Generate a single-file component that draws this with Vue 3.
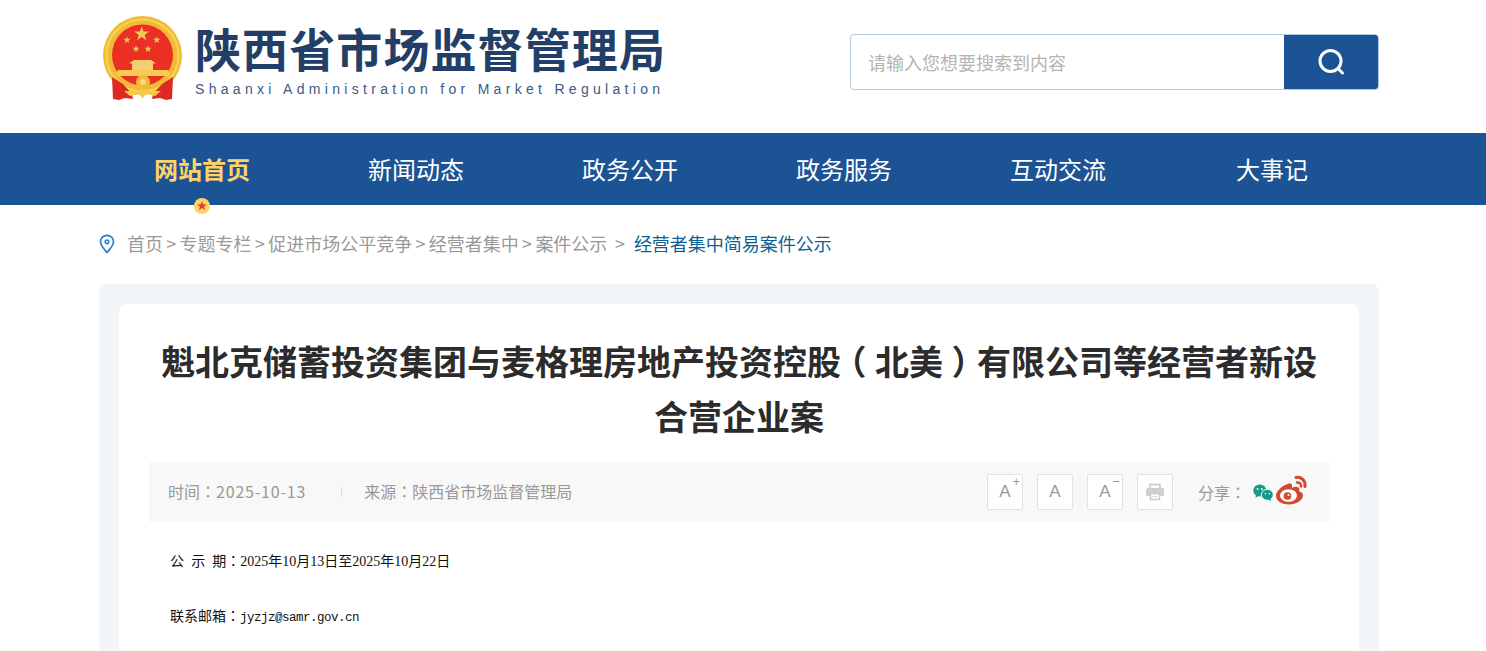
<script setup>
const navItems = ['网站首页', '新闻动态', '政务公开', '政务服务', '互动交流', '大事记']
const crumbs = ['首页', '专题专栏', '促进市场公平竞争', '经营者集中', '案件公示']

// five point star path for the emblem
function star(cx, cy, r) {
  let d = ''
  for (let i = 0; i < 10; i++) {
    const rad = i % 2 ? r * 0.4 : r
    const a = (Math.PI / 5) * i - Math.PI / 2
    d += (i ? 'L' : 'M') + (cx + rad * Math.cos(a)).toFixed(2) + ' ' + (cy + rad * Math.sin(a)).toFixed(2)
  }
  return d + 'Z'
}
const stars = [star(40.7, 20, 7.8), star(26, 26, 3.8), star(55.7, 26, 3.8), star(35, 35, 3.8), star(47, 35, 3.8)]
</script>

<template>
  <div class="page">
    <header class="top wrap">
      <div class="logo">
        <svg class="emblem" width="84" height="88" viewBox="0 0 84 88">
          <circle cx="41.500" cy="41.500" r="39.500" fill="#f1bb35" />
          <circle cx="41.500" cy="41.500" r="36" fill="none" stroke="#f7d35a" stroke-width="2" />
          <circle cx="41.500" cy="41" r="30.500" fill="#ec2f24" />
          <path v-for="s in stars" :key="s" :d="s" fill="#f3c65a" />
          <path d="M33 46h17l5 3.500H28zM31 49.500h21V56H31z" fill="#f6cf70" />
          <path d="M17 56h50l3 6H14z" fill="#f6cb55" />
          <path d="M11 63 L22 70 L31 80 L32 85 L24 84 L18 86 L12 85 Z" fill="#dc2a22" />
          <path d="M72 63 L61 70 L52 80 L51 85 L59 84 L65 86 L71 85 Z" fill="#dc2a22" />
          <circle cx="42" cy="68" r="7" fill="#f0bb3a" />
          <circle cx="42" cy="68" r="3" fill="#f8d97a" />
          <path d="M23 77h14l4.500-3 4.500 3h14l-6 5-9-2-3.500 4.500L38 80l-9 2z" fill="#f5c94a" />
        </svg>
        <div class="logo-text">
          <div class="logo-cn">陕西省市场监督管理局</div>
          <div class="logo-en">Shaanxi Administration for Market Regulation</div>
        </div>
      </div>
      <div class="search">
        <span class="search-hint">请输入您想要搜索到内容</span>
        <div class="search-btn">
          <svg width="30" height="30" viewBox="0 0 30 30" fill="none" stroke="#fff" stroke-width="3" stroke-linecap="round">
            <circle cx="14.500" cy="14" r="10.500" />
            <path d="M22.500 22l4 4" />
          </svg>
        </div>
      </div>
    </header>

    <nav class="nav">
      <ul class="nav-list">
        <li v-for="(item, i) in navItems" :key="item" :class="{ active: i === 0 }">
          {{ item }}
          <span v-if="i === 0" class="nav-dot">
            <svg width="10" height="10" viewBox="0 0 10 10"><path d="M5 0l1.300 3.400H10L7 5.600 8.100 9.300 5 7.100 1.900 9.300 3 5.600 0 3.400h3.700z" fill="#ee3b26" /></svg>
          </span>
        </li>
      </ul>
    </nav>

    <div class="crumbs wrap">
      <svg class="pin" width="16" height="20" viewBox="0 0 16 20" fill="none" stroke="#2f80c8" stroke-width="1.700">
        <path d="M8 18.500C4.500 14.500 1.500 11.500 1.500 7.800a6.500 6.500 0 0 1 13 0c0 3.700-3 6.700-6.500 10.700z" />
        <circle cx="8" cy="7.800" r="1.800" />
      </svg>
      <template v-for="(c, i) in crumbs" :key="c">
        <span>{{ c }}</span><span v-if="i < crumbs.length - 1" class="sep">&gt;</span>
      </template>
      <span class="sep last-sep">&gt;</span>
      <span class="current">经营者集中简易案件公示</span>
    </div>

    <main class="outer wrap">
      <section class="card">
        <h1 class="title">魁北克储蓄投资集团与麦格理房地产投资控股<span class="paren">（</span>北美<span class="paren">）</span>有限公司等经营者新设<br />合营企业案</h1>
        <div class="meta">
          <span>时间<span class="tc">：</span><span class="date">2025-10-13</span></span>
          <i class="meta-line"></i>
          <span>来源<span class="tc">：</span>陕西省市场监督管理局</span>
          <div class="tools">
            <span class="tool">A<b class="mark">+</b></span>
            <span class="tool">A</span>
            <span class="tool">A<b class="mark">−</b></span>
            <span class="tool">
              <svg width="20" height="18" viewBox="0 0 20 18">
                <path d="M5 5V1.500h10V5" fill="none" stroke="#c8c8c8" stroke-width="1.600" />
                <path d="M2.500 5h15a1.500 1.500 0 0 1 1.500 1.500V13h-4v-3H5v3H1V6.500A1.500 1.500 0 0 1 2.500 5z" fill="#cfcfcf" />
                <path d="M5.500 10.500h9v6h-9z" fill="#fff" stroke="#c8c8c8" stroke-width="1.400" />
                <path d="M7.500 13.500h5" stroke="#d8d8d8" stroke-width="1.200" />
              </svg>
            </span>
            <span class="share">分享<span class="tc">：</span></span>
            <svg class="wechat" width="21" height="18" viewBox="0 0 21 18">
              <ellipse cx="6.800" cy="6.500" rx="6.500" ry="6" fill="#17998a" />
              <path d="M3 10.500l-.6 3.300 3.400-2z" fill="#17998a" />
              <ellipse cx="14.300" cy="10.800" rx="6" ry="5.500" fill="#17998a" stroke="#f8f8f8" stroke-width="1" />
              <path d="M17.300 14.500l.8 2.700-3-1.700z" fill="#17998a" />
              <circle cx="4.600" cy="5" r="1" fill="#f8f8f8" />
              <circle cx="8.800" cy="5" r="1" fill="#f8f8f8" />
              <circle cx="12.300" cy="9.800" r=".8" fill="#f8f8f8" />
              <circle cx="16.300" cy="9.800" r=".8" fill="#f8f8f8" />
            </svg>
            <svg class="weibo" width="34" height="30" viewBox="0 0 34 30">
              <path d="M14 8.500C7 10.500 1 16 1 21c0 5 6.500 8.500 13 8.500 7.500 0 14-4.500 14-9 0-2.600-2.300-3.800-4-4.300 1-2.500.3-4-2-4.300-2-.2-4 .5-5 1 .5-2.800-.5-5.300-3-4.400z" fill="#d24a2e" />
              <ellipse cx="13.500" cy="20.500" rx="8.500" ry="6.300" fill="#fff" />
              <circle cx="12.500" cy="21" r="3.800" fill="#d24a2e" />
              <circle cx="13.500" cy="20" r="1.100" fill="#fff" />
              <path d="M21 2.500c5-1 10 3 9 9" fill="none" stroke="#d24a2e" stroke-width="3" stroke-linecap="round" />
              <path d="M22 7.500c2.500-.5 4.500 1.500 4 4" fill="none" stroke="#d24a2e" stroke-width="2.500" stroke-linecap="round" />
            </svg>
          </div>
        </div>
        <div class="content">
          <p class="spaced">公 示 期<span class="tc">：</span><span class="dig">2025</span>年<span class="dig">10</span>月<span class="dig">13</span>日至<span class="dig">2025</span>年<span class="dig">10</span>月<span class="dig">22</span>日</p>
          <p>联系邮箱<span class="tc">：</span><span class="mono">jyzjz@samr.gov.cn</span></p>
        </div>
      </section>
    </main>
  </div>
</template>

<style>
html, body {
  margin: 0;
  overflow: hidden;
}
</style>

<style scoped>
.page {
  height: 651px;
  overflow: hidden;
  font-family: "Noto Sans CJK SC", "Noto Sans", sans-serif;
}
.wrap {
  width: 1280px;
  margin-left: 99px;
  box-sizing: border-box;
}
.tc {
  font-family: "Noto Sans CJK TC", sans-serif;
}
.top {
  height: 133px;
  display: flex;
  justify-content: space-between;
  align-items: flex-start;
}
.logo {
  display: flex;
  padding-top: 14px;
}
.emblem {
  margin-left: 2px;
}
.logo-text {
  margin-left: 10px;
}
.logo-cn {
  font-size: 46px;
  font-weight: 700;
  line-height: 66px;
  letter-spacing: 1.100px;
  color: #233f68;
  white-space: nowrap;
}
.logo-en {
  font-family: "Liberation Sans", sans-serif;
  font-size: 14px;
  line-height: 18px;
  letter-spacing: 4.300px;
  color: #3c5a82;
  white-space: nowrap;
}
.search {
  margin-top: 34px;
  width: 529px;
  height: 56px;
  box-sizing: border-box;
  border: 1px solid #b5c9dc;
  border-radius: 4px;
  display: flex;
  align-items: center;
  justify-content: space-between;
  overflow: hidden;
}
.search-hint {
  margin-left: 17px;
  font-size: 18px;
  color: #b4b4b4;
}
.search-btn {
  width: 94px;
  height: 100%;
  background: #1c5394;
  display: flex;
  align-items: center;
  justify-content: center;
}
.nav {
  height: 72px;
  background: #1c5394;
}
.nav-list {
  width: 1284px;
  margin: 0 0 0 95px;
  padding: 0;
  list-style: none;
  display: flex;
  height: 72px;
}
.nav-list li {
  width: 214px;
  text-align: center;
  line-height: 72px;
  font-size: 24px;
  color: #fff;
  position: relative;
}
.nav-list li.active {
  color: #fdd36a;
  font-weight: 700;
}
.nav-dot {
  position: absolute;
  left: 99px;
  top: 65px;
  width: 16px;
  height: 16px;
  border-radius: 50%;
  background: #fdd36a;
  display: flex;
  align-items: center;
  justify-content: center;
}
.crumbs {
  height: 79px;
  padding-bottom: 4px;
  display: flex;
  align-items: center;
  font-size: 18px;
  color: #999;
  white-space: nowrap;
}
.pin {
  margin-right: 12px;
  margin-top: 2px;
}
.sep {
  margin: 0 3.300px;
  font-size: 18px;
}
.last-sep {
  margin: 0 9px 0 7.500px;
}
.current {
  color: #0f5f93;
}
.outer {
  background: #f2f5f8;
  border-radius: 8px;
  padding: 20px;
  height: 600px;
}
.card {
  background: #fff;
  border-radius: 8px;
  padding: 29px 30px 0;
  height: 560px;
}
.title {
  margin: 0;
  font-size: 34px;
  font-weight: 700;
  line-height: 55px;
  color: #2c2c2c;
  text-align: center;
}
.paren {
  font-feature-settings: "halt";
  padding: 0 8.500px;
}
.meta {
  margin-top: 19px;
  height: 60px;
  background: #f8f8f8;
  display: flex;
  align-items: center;
  padding-left: 19px;
  padding-bottom: 2px;
  box-sizing: border-box;
  font-size: 16px;
  color: #999;
}
.date {
  letter-spacing: 0.800px;
}
.meta-line {
  width: 1px;
  height: 10px;
  background: #ddd;
  margin: 2px 22px 0 35px;
}
.tools {
  margin-left: auto;
  display: flex;
  align-items: center;
  margin-right: 20px;
  padding-top: 1px;
}
.tool {
  position: relative;
  width: 36px;
  height: 36px;
  box-sizing: border-box;
  border: 1px solid #e2e2e2;
  border-radius: 2px;
  background: #fff;
  margin-right: 14px;
  display: flex;
  align-items: center;
  justify-content: center;
  font-family: "Liberation Sans", sans-serif;
  font-size: 17px;
  color: #999;
}
.mark {
  position: absolute;
  right: 2px;
  top: 0;
  font-size: 13px;
  line-height: 14px;
  font-weight: 400;
}
.share {
  margin-left: 11px;
  margin-right: 7px;
  white-space: nowrap;
}
.wechat {
  margin-top: 2px;
  margin-right: 1px;
}
.weibo {
  margin-top: -3px;
}
.content {
  padding: 28px 21px 0;
  font-size: 14px;
  color: #111;
}
.content p {
  margin: 0 0 33px;
  line-height: 21px;
  white-space: pre-wrap;
}
.spaced {
  word-spacing: 4px;
}
.dig {
  font-family: "Liberation Serif", serif;
}
.mono {
  font-family: "Liberation Mono", monospace;
  font-size: 12.500px;
  letter-spacing: -0.500px;
}
</style>
